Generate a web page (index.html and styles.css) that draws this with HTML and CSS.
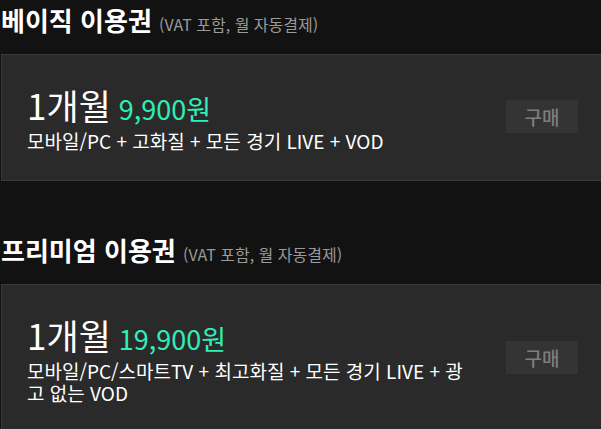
FILE: index.html
```html
<!DOCTYPE html>
<html lang="ko">
<head>
<meta charset="utf-8">
<link rel="stylesheet" href="styles.css">
</head>
<body>
<div class="page">
  <section class="plan">
    <h2 class="plan-title">베이직 이용권 <span class="plan-note">(VAT 포함, 월 자동결제)</span></h2>
    <div class="card">
      <div class="card-info">
        <div class="card-head"><span class="period">1개월</span><span class="price">9,900원</span></div>
        <p class="desc">모바일/PC + 고화질 + 모든 경기 LIVE + VOD</p>
      </div>
      <button class="buy">구매</button>
    </div>
  </section>
  <section class="plan">
    <h2 class="plan-title">프리미엄 이용권 <span class="plan-note">(VAT 포함, 월 자동결제)</span></h2>
    <div class="card">
      <div class="card-info">
        <div class="card-head"><span class="period">1개월</span><span class="price">19,900원</span></div>
        <p class="desc">모바일/PC/스마트TV + 최고화질 + 모든 경기 LIVE + 광고 없는 VOD</p>
      </div>
      <button class="buy">구매</button>
    </div>
  </section>
</div>
</body>
</html>
```
FILE: styles.css
```css
html, body {
  margin: 0;
  padding: 0;
  background: #121212;
  overflow: hidden;
}
body {
  font-family: "Noto Sans CJK KR", "Noto Sans", sans-serif;
  color: #fff;
}
.page {
  width: 603px;
}
.plan-title {
  margin: 2px 0 12px 1px;
  font-size: 26px;
  line-height: 36px;
  font-weight: 700;
}
.plan + .plan .plan-title {
  margin-top: 51px;
}
.plan-note {
  font-size: 16px;
  font-weight: 400;
  color: #9a9a9a;
}
.card {
  margin-left: 1px;
  background: #2a2a2a;
  border: 1px solid #3a3a3a;
  display: flex;
  align-items: center;
  padding: 32px 24px 28px 25px;
  box-sizing: border-box;
  width: 602px;
}
.card-info {
  flex: 1;
  max-width: 450px;
}
.card-head {
  display: flex;
  align-items: baseline;
  gap: 8px;
}
.period {
  font-size: 35px;
  line-height: 1;
}
.price {
  font-size: 27px;
  line-height: 1;
  color: #30eeb8;
}
.desc {
  margin: 8px 0 0;
  font-size: 19px;
  line-height: 22px;
}
.buy {
  margin-left: auto;
  margin-bottom: 6px;
  width: 72px;
  height: 33px;
  border: none;
  background: #343434;
  color: #7e7e7e;
  font-family: inherit;
  font-size: 19px;
  font-weight: 500;
  padding: 0;
}
```
